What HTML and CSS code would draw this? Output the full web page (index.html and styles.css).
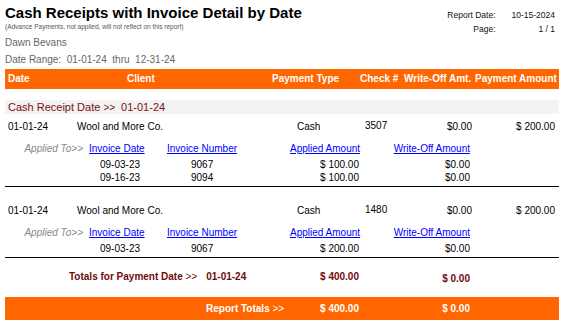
FILE: index.html
```html
<!DOCTYPE html>
<html>
<head>
<meta charset="utf-8">
<title>Cash Receipts with Invoice Detail by Date</title>
<link rel="stylesheet" href="styles.css">
</head>
<body>
<div class="report">
  <header class="top">
    <div class="heading">
      <h1 class="title">Cash Receipts with Invoice Detail by Date</h1>
      <p class="note">(Advance Payments, not applied, will not reflect on this report)</p>
      <p class="meta">Dawn Bevans</p>
      <p class="meta range">Date Range:  01-01-24  thru  12-31-24</p>
    </div>
    <dl class="info">
      <dt>Report Date:</dt><dd>10-15-2024</dd>
      <dt>Page:</dt><dd>1 / 1</dd>
    </dl>
  </header>

  <div class="colhead">
    <span>Date</span>
    <span>Client</span>
    <span>Payment Type</span>
    <span>Check #</span>
    <span>Write-Off Amt.</span>
    <span>Payment Amount</span>
  </div>

  <div class="group">Cash Receipt Date <span class="arrows-sm">&gt;&gt;</span><span class="group-date">01-01-24</span></div>

  <section class="payment">
    <div class="row">
      <span>01-01-24</span>
      <span>Wool and More Co.</span>
      <span>Cash</span>
      <span class="check">3507</span>
      <span class="num">$0.00</span>
      <span class="num">$ 200.00</span>
    </div>
    <div class="invoices">
      <span class="lbl">Applied To&gt;&gt;</span>
      <a class="hd" href="#">Invoice Date</a>
      <a class="hd" href="#">Invoice Number</a>
      <a class="hd num" href="#">Applied Amount</a>
      <a class="hd num" href="#">Write-Off Amount</a>

      <span class="cell inv-date">09-03-23</span>
      <span class="cell inv-no">9067</span>
      <span class="cell num">$ 100.00</span>
      <span class="cell num">$0.00</span>

      <span class="cell inv-date">09-16-23</span>
      <span class="cell inv-no">9094</span>
      <span class="cell num">$ 100.00</span>
      <span class="cell num">$0.00</span>
    </div>
  </section>

  <section class="payment">
    <div class="row">
      <span>01-01-24</span>
      <span>Wool and More Co.</span>
      <span>Cash</span>
      <span class="check">1480</span>
      <span class="num">$0.00</span>
      <span class="num">$ 200.00</span>
    </div>
    <div class="invoices">
      <span class="lbl">Applied To&gt;&gt;</span>
      <a class="hd" href="#">Invoice Date</a>
      <a class="hd" href="#">Invoice Number</a>
      <a class="hd num" href="#">Applied Amount</a>
      <a class="hd num" href="#">Write-Off Amount</a>

      <span class="cell inv-date">09-03-23</span>
      <span class="cell inv-no">9067</span>
      <span class="cell num">$ 200.00</span>
      <span class="cell num">$0.00</span>
    </div>
  </section>

  <div class="totals">
    <span class="tlabel">Totals for Payment Date <span class="arrows">&gt;&gt;</span><span class="tdate">01-01-24</span></span>
    <span class="num">$ 400.00</span>
    <span class="num low">$ 0.00</span>
  </div>

  <div class="grand">
    <span class="glabel">Report Totals <span class="arrows">&gt;&gt;</span></span>
    <span class="num">$ 400.00</span>
    <span class="num">$ 0.00</span>
  </div>
</div>
</body>
</html>
```

FILE: styles.css
```css
* {
  margin: 0;
  padding: 0;
  box-sizing: border-box;
}

body {
  margin: 0;
  background: #fff;
  color: #000;
  font-family: "Liberation Sans", Arial, sans-serif;
}

.report {
  width: 554px;
  margin-left: 5px;
}

/* ---------- top header ---------- */
.top {
  display: flex;
  justify-content: space-between;
  align-items: flex-start;
}

.title {
  margin-top: 3px;
  font-size: 15px;
  line-height: 19px;
  font-weight: bold;
}

.note {
  font-size: 6.5px;
  line-height: 9px;
  color: #555;
}

.meta {
  margin-top: 6px;
  font-size: 10px;
  line-height: 12px;
  color: #666;
}

.range {
  margin-top: 5px;
  white-space: pre;
}

.info {
  display: grid;
  grid-template-columns: auto auto;
  column-gap: 16px;
  margin-top: 8px;
  padding-right: 4px;
  font-size: 8.5px;
  line-height: 14px;
  white-space: nowrap;
  color: #111;
}

.info dt,
.info dd {
  text-align: right;
}

/* ---------- column header bar ---------- */
.colhead {
  display: grid;
  grid-template-columns: 119px 145px 88px 44px 71px 1fr;
  margin-top: 3px;
  height: 20px;
  padding-left: 3px;
  background: #ff6600;
  color: #fff;
  font-size: 10px;
  line-height: 20px;
  font-weight: bold;
  white-space: nowrap;
}

/* ---------- group band ---------- */
.group {
  margin-top: 11px;
  height: 14px;
  padding-left: 3px;
  background: #f3f3f3;
  color: #7a1010;
  font-size: 11px;
  line-height: 14px;
}

.arrows-sm {
  font-size: 10px;
}

.group-date {
  margin-left: 6px;
}

/* ---------- payment block ---------- */
.payment {
  padding-top: 6px;
  padding-bottom: 2px;
  border-bottom: 1px solid #000;
}

.payment + .payment {
  padding-top: 17px;
}

.row {
  display: grid;
  grid-template-columns: 69px 220px 68px 60px 47px 83px;
  padding-left: 3px;
  font-size: 10px;
  line-height: 14px;
}

.num {
  text-align: right;
}

.check {
  margin-top: -1px;
}

.invoices {
  display: grid;
  grid-template-columns: 84px 78px 123px 69px 111px;
  margin-top: 8px;
  font-size: 10px;
}

.invoices .lbl {
  padding-right: 6px;
  text-align: right;
  font-style: italic;
  color: #888;
  line-height: 14px;
  padding-bottom: 2px;
}

.invoices .hd {
  color: #0000ff;
  text-decoration: underline;
  line-height: 14px;
  padding-bottom: 2px;
  white-space: nowrap;
}

.invoices .cell {
  line-height: 13px;
}

.inv-date {
  grid-column: 2;
  padding-left: 11px;
}

.inv-no {
  padding-left: 24px;
}

/* ---------- totals ---------- */
.totals,
.grand {
  display: grid;
  grid-template-columns: 280px 74px 111px;
  font-size: 10px;
  font-weight: bold;
}

.totals {
  margin-top: 12px;
  line-height: 14px;
  color: #6e0c0c;
}

.tlabel {
  padding-left: 64px;
  white-space: nowrap;
}

.arrows {
  font-weight: normal;
}

.tdate {
  margin-left: 9px;
}

.low {
  margin-top: 2px;
}

.grand {
  margin-top: 11px;
  height: 23px;
  line-height: 23px;
  background: #ff6600;
  color: #fff;
}

.glabel {
  padding-left: 201px;
  white-space: nowrap;
}
```
